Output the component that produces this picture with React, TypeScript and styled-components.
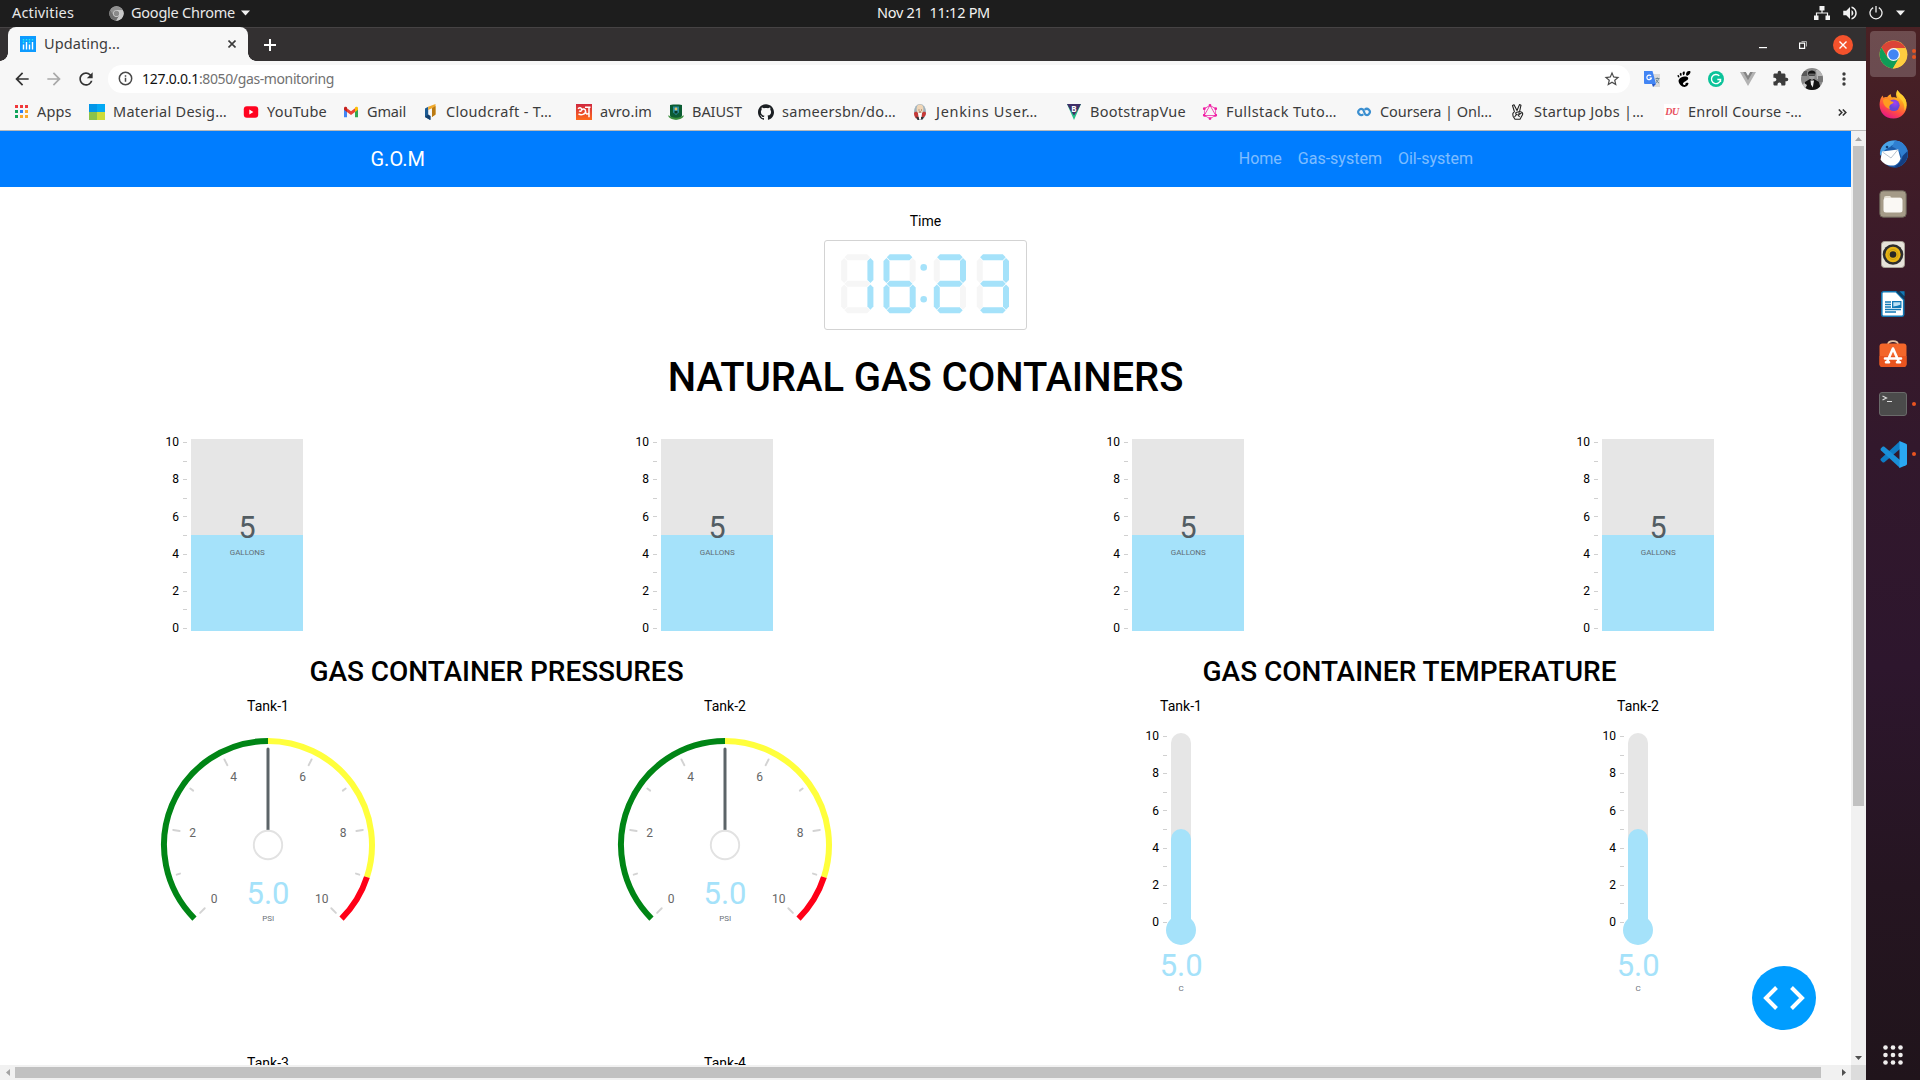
import React, { useLayoutEffect, useRef, useState } from 'react';
import styled, { createGlobalStyle } from 'styled-components';
import { SiGithub, SiGnome, SiGraphql } from 'react-icons/si';
import { MdExtension, MdStarOutline, MdArrowBack, MdArrowForward, MdRefresh, MdVolumeUp } from 'react-icons/md';

const GlobalStyle = createGlobalStyle`
  * { box-sizing: border-box; }
  html, body { margin: 0; padding: 0; overflow: hidden; background: #fff; }
  svg { display: block; flex: none; }
`;

const UI_FONT = '"Noto Sans", "Open Sans", sans-serif';
const PAGE_FONT = 'Roboto, "Liberation Sans", sans-serif';
const ACCENT = '#a5e2fa';

/* ---------- shared text ---------- */

const FitBox = styled.span<{ $w: number; $size: number; $color: string; $lift: number }>`
  display: block;
  flex: none;
  width: ${(p) => p.$w}px;
  padding-bottom: ${(p) => p.$lift * 2}px;
  font-family: ${UI_FONT};
  font-size: ${(p) => p.$size}px;
  line-height: 20px;
  color: ${(p) => p.$color};
  white-space: pre;
`;

interface FitProps { w: number; size?: number; color?: string; lift?: number; children: string }

/* Spreads or tightens its letters so that the text fills the given width. */
function Fit({ w, size = 14.5, color = '#3c3c3c', lift = 1, children }: FitProps) {
  const ref = useRef<HTMLSpanElement>(null);
  const [spacing, setSpacing] = useState(0);
  useLayoutEffect(() => {
    if (ref.current) {
      const natural = ref.current.getBoundingClientRect().width;
      setSpacing((w - natural) / children.length);
    }
  }, [w, children]);
  return (
    <FitBox $w={w} $size={size} $color={color} $lift={lift}>
      <span ref={ref} style={{ letterSpacing: spacing }}>{children}</span>
    </FitBox>
  );
}

const Gap = styled.div<{ $w: number }>`
  flex: none;
  width: ${(p) => p.$w}px;
`;

/* ---------- desktop ---------- */

const Desktop = styled.div`
  width: 1920px;
  height: 1080px;
  display: flex;
  flex-direction: column;
  overflow: hidden;
`;
const TopBar = styled.header`
  height: 27px;
  flex: none;
  display: flex;
  align-items: center;
  padding-bottom: 1px;
  background: #1d1d1d;
`;
const Work = styled.div`
  flex: 1;
  display: flex;
  min-height: 0;
`;
const Browser = styled.main`
  width: 1866px;
  display: flex;
  flex-direction: column;
`;

/* ---------- browser frame ---------- */

const TabStrip = styled.div`
  height: 34px;
  flex: none;
  display: flex;
  background: #333031;
  border-top: 1px solid #464344;
  padding-left: 8px;
`;
const Tab = styled.div`
  position: relative;
  width: 240px;
  display: flex;
  align-items: center;
  margin-top: -1px;
  padding-left: 12px;
  gap: 8px;
  border-radius: 8px 8px 0 0;
  background: #f7f7f7;
  &::before, &::after {
    content: '';
    position: absolute;
    bottom: 0;
    width: 8px;
    height: 8px;
  }
  &::before { left: -8px; background: radial-gradient(circle at 0 0, transparent 7.5px, #f7f7f7 8px); }
  &::after { right: -8px; background: radial-gradient(circle at 100% 0, transparent 7.5px, #f7f7f7 8px); }
`;
const StripRest = styled.div`
  flex: 1;
  display: flex;
  align-items: center;
  padding-left: 16px;
`;
const Spacer = styled.div`flex: 1;`;
const CloseDisc = styled.div`
  width: 20px;
  height: 20px;
  border-radius: 50%;
  background: #f4522c;
  display: flex;
  align-items: center;
  justify-content: center;
`;
const Toolbar = styled.div`
  height: 35px;
  flex: none;
  display: flex;
  align-items: center;
  background: #f7f7f7;
  padding-left: 12px;
`;
const Omnibox = styled.div`
  width: 1522px;
  height: 28px;
  border-radius: 14px;
  background: #fff;
  display: flex;
  align-items: center;
  padding: 0 9px 0 10px;
`;
const Extensions = styled.div`
  display: flex;
  align-items: center;
  padding-left: 11px;
`;
const ExtSlot = styled.div<{ $w?: number }>`
  width: ${(p) => p.$w ?? 32}px;
  height: 24px;
  display: flex;
  align-items: center;
  justify-content: center;
`;
const Avatar = styled.div`
  width: 22px;
  height: 22px;
  border-radius: 50%;
  overflow: hidden;
`;
const Bookmarks = styled.div`
  height: 35px;
  flex: none;
  display: flex;
  align-items: center;
  background: #f7f7f7;
  border-bottom: 1px solid #b9b9b9;
  padding: 0 0 2px 13px;
`;
const Bookmark = styled.div<{ $w: number }>`
  width: ${(p) => p.$w}px;
  flex: none;
  display: flex;
  align-items: center;
  gap: 8px;
`;
const View = styled.div`
  flex: 1;
  min-height: 0;
  display: grid;
  grid-template-columns: 1851px 15px;
  grid-template-rows: 934px 15px;
`;

/* ---------- scrollbars ---------- */

const VTrack = styled.div`
  background: #f1f1f1;
  display: flex;
  flex-direction: column;
  align-items: center;
  justify-content: space-between;
`;
const HTrack = styled.div`
  background: #f1f1f1;
  display: flex;
  align-items: center;
  justify-content: space-between;
`;
const ArrowCell = styled.div`
  width: 15px;
  height: 15px;
  display: flex;
  align-items: center;
  justify-content: center;
`;
const VThumb = styled.div`
  width: 11px;
  height: 660px;
  margin-bottom: auto;
  background: #c1c1c1;
`;
const HThumb = styled.div`
  width: 1806px;
  height: 11px;
  margin-right: auto;
  background: #c1c1c1;
`;
const Corner = styled.div`background: #dcdcdc;`;

/* ---------- page ---------- */

const Page = styled.div`
  position: relative;
  overflow: hidden;
  background: #fff;
  font-family: ${PAGE_FONT};
  color: #000;
`;
const Nav = styled.nav`
  height: 56px;
  background: #007dff;
  display: flex;
  align-items: center;
  justify-content: space-between;
  padding: 0 378px 0 370.5px;
`;
const Brand = styled.span`
  font-size: 20px;
  line-height: 30px;
  color: #fff;
`;
const Links = styled.div`
  display: flex;
  gap: 16px;
  font-size: 16px;
  line-height: 24px;
  color: rgba(255, 255, 255, 0.5);
`;
const TimeBlock = styled.section`
  padding-top: 24px;
  display: flex;
  flex-direction: column;
  align-items: center;
`;
const Label = styled.div`
  height: 21px;
  font-size: 14px;
  line-height: 21px;
  text-align: center;
`;
const ClockBox = styled.div`
  width: 203px;
  height: 90px;
  margin-top: 8px;
  border: 1px solid #d3d3d3;
  border-radius: 3px;
  padding: 13px 0 0 16px;
`;
const H1 = styled.h1`
  margin: 24px 0 0;
  font-size: 40px;
  line-height: 48px;
  font-weight: 500;
  letter-spacing: -0.05px;
  text-align: center;
`;
const TankRow = styled.section`
  height: 253px;
  display: flex;
  padding: 29px 0 0 150px;
`;
const TankCell = styled.div`
  flex: none;
  width: 470.33px;
`;
const Halves = styled.div`
  display: flex;
  width: 1828px;
  margin-left: 39.5px;
`;
const Half = styled.section<{ $shift?: number }>`
  width: 914px;
  flex: none;
  margin-left: ${(p) => p.$shift ?? 0}px;
`;
const H2 = styled.h2`
  margin: 0 0 8px;
  height: 33px;
  font-size: 28px;
  line-height: 33px;
  font-weight: 500;
  letter-spacing: -0.04px;
  text-align: center;
`;
const Cells = styled.div`
  display: grid;
  grid-template-columns: 457px 457px;
  grid-auto-rows: 357px;
`;
const Cell = styled.div`
  display: flex;
  flex-direction: column;
  align-items: center;
`;
const DebugButton = styled.div`
  position: absolute;
  left: 1752px;
  top: 835px;
  width: 64px;
  height: 64px;
  border-radius: 50%;
  background: #009dff;
  display: flex;
  align-items: center;
  justify-content: center;
`;
const ChartText = styled.text`
  font-family: ${PAGE_FONT};
`;

/* ---------- seven segment clock ---------- */

const hSeg = (y: number) => `3.3,${y + 3} 6.2,${y} 26,${y} 28.9,${y + 3} 26,${y + 6} 6.2,${y + 6}`;
const vSeg = (x: number, y: number) =>
  `${x + 3},${y} ${x + 6},${y + 3} ${x + 6},${y + 22} ${x + 3},${y + 25.2} ${x},${y + 22} ${x},${y + 3}`;
const SEGMENTS: Record<string, string> = {
  a: hSeg(0), g: hSeg(26.5), d: hSeg(53),
  f: vSeg(0, 3.6), b: vSeg(26.2, 3.6), e: vSeg(0, 30.2), c: vSeg(26.2, 30.2),
};
const DIGITS: Record<string, string> = { '1': 'bc', '6': 'acdefg', '2': 'abged', '3': 'abgcd' };

function Clock() {
  const places: [string, number][] = [['1', 0.2], ['6', 42.5], ['2', 92.8], ['3', 135.8]];
  return (
    <svg width="170" height="60" viewBox="0 0 170 60">
      {places.map(([d, x]) => (
        <g key={d} transform={`translate(${x} 0.3)`}>
          {Object.entries(SEGMENTS).map(([k, pts]) => (
            <polygon key={k} points={pts} fill={DIGITS[d].includes(k) ? ACCENT : '#f6f6f6'} />
          ))}
        </g>
      ))}
      <circle cx="82.7" cy="13.4" r="3.3" fill={ACCENT} />
      <circle cx="82.7" cy="45.3" r="3.3" fill={ACCENT} />
    </svg>
  );
}

/* ---------- charts ---------- */

function Axis({ right, top }: { right: number; top: number }) {
  return (
    <g>
      {Array.from({ length: 11 }, (_, i) => 10 - i).map((v) => {
        const y = top + (10 - v) * 18.6;
        return (
          <g key={v}>
            <rect x={right - 4} y={Math.round(y)} width="4" height="1" fill="#d0d0d0" />
            {v % 2 === 0 && (
              <ChartText x={right - 8} y={y + 4.2} fontSize="12" textAnchor="end" fill="#000">{v}</ChartText>
            )}
          </g>
        );
      })}
    </g>
  );
}

function Tank() {
  return (
    <svg width="160" height="210" viewBox="0 0 160 210">
      <Axis right={37} top={11} />
      <rect x="41" y="8" width="112" height="192" fill="#e6e6e6" />
      <rect x="41" y="104" width="112" height="96" fill={ACCENT} />
      <ChartText x="97.2" y="106.6" fontSize="30.5" textAnchor="middle" fill="#535d63">5</ChartText>
      <ChartText x="97.2" y="124.4" fontSize="8" textAnchor="middle" fill="#5f6d75">GALLONS</ChartText>
    </svg>
  );
}

const polar = (r: number, deg: number): [number, number] => {
  const a = (deg * Math.PI) / 180;
  return [110 + r * Math.sin(a), 128 - r * Math.cos(a)];
};
const arc = (from: number, to: number) => {
  const [x1, y1] = polar(104, from);
  const [x2, y2] = polar(104, to);
  return `M${x1} ${y1}A104 104 0 ${to - from > 180 ? 1 : 0} 1 ${x2} ${y2}`;
};
const GAUGE_LABELS: [string, number, number][] = [
  ['0', 56.2, 186], ['2', 34.7, 120], ['4', 75.6, 64], ['6', 144.5, 64], ['8', 185, 120], ['10', 163.7, 186],
];

function Gauge() {
  return (
    <svg width="220" height="240" viewBox="0 0 220 240">
      <g fill="none" strokeWidth="6">
        <path d={arc(-135, 0)} stroke="#008515" />
        <path d={arc(0, 108)} stroke="#ffff3c" />
        <path d={arc(108, 135)} stroke="#ff0017" />
      </g>
      {Array.from({ length: 11 }, (_, i) => {
        if (i === 5) return null;
        const deg = -135 + i * 27;
        const [x1, y1] = polar(96, deg);
        const [x2, y2] = polar(i % 2 === 0 ? 89.5 : 92.5, deg);
        return <line key={i} x1={x1} y1={y1} x2={x2} y2={y2} stroke="#d3d3d3" strokeWidth="1.9" strokeLinecap="round" />;
      })}
      {GAUGE_LABELS.map(([t, x, y]) => (
        <ChartText key={t} x={x} y={y} fontSize="12" textAnchor="middle" fill="#666">{t}</ChartText>
      ))}
      <line x1="110" y1="32" x2="110" y2="113" stroke="#5c6468" strokeWidth="3" strokeLinecap="round" />
      <circle cx="110" cy="128" r="14.2" fill="#fff" stroke="#e2e2e2" strokeWidth="1.9" />
      <ChartText x="110" y="187" fontSize="31" textAnchor="middle" fill={ACCENT}>5.0</ChartText>
      <ChartText x="110.2" y="203.7" fontSize="8" textAnchor="middle" fill="#6b7179">PSI</ChartText>
    </svg>
  );
}

function Thermometer() {
  return (
    <svg width="120" height="290" viewBox="0 0 120 290">
      <Axis right={46} top={19} />
      <rect x="50" y="16" width="20" height="200" rx="10" fill="#e6e6e6" />
      <rect x="50" y="112" width="20" height="104" rx="10" fill={ACCENT} />
      <circle cx="60" cy="213" r="15" fill={ACCENT} />
      <ChartText x="60.2" y="259" fontSize="31" textAnchor="middle" fill={ACCENT}>5.0</ChartText>
      <ChartText x="60.2" y="274.3" fontSize="8" textAnchor="middle" fill="#6b7179">C</ChartText>
    </svg>
  );
}

/* ---------- icons ---------- */

function ChromeLogo({ size, mono = false }: { size: number; mono?: boolean }) {
  const c = mono ? ['#8f8f8f', '#6e6e6e', '#c9c9c9', '#8a8a8a', '#d5d5d5'] : ['#db4437', '#0f9d58', '#ffcd40', '#4285f4', '#f5f5f5'];
  return (
    <svg width={size} height={size} viewBox="0 0 48 48">
      <circle cx="24" cy="24" r="23" fill={c[2]} />
      <path d="M4.1 12.5A23 23 0 0 1 44 13.5H24L14.5 29.5Z" fill={c[0]} />
      <path d="M4.1 12.5A23 23 0 0 0 23 47L33.5 29.5L14.5 29.5Z" fill={c[1]} />
      <path d="M24 13.5H44A23 23 0 0 1 23 47L33.5 29.5Z" fill={c[2]} />
      <circle cx="24" cy="24" r="10.8" fill={c[4]} />
      <circle cx="24" cy="24" r="8.6" fill={c[3]} />
    </svg>
  );
}
const Caret = () => (
  <svg width="9" height="6" viewBox="0 0 9 6"><path d="M0 .5h9L4.5 5.5z" fill="#f2f2f2" /></svg>
);
const DashIcon = () => (
  <svg width="16" height="16" viewBox="0 0 16 16">
    <path fill="#0d9bff" d="M0 0h16v16H0z" />
    <path stroke="#fff" strokeWidth="1.4" d="M3.5 8.5v5M6.5 6v7.5M9.5 8.5v5M12.5 6v7.5" />
    <path stroke="#22f0f0" strokeWidth="1.4" d="M3.5 3v1.4M6.5 3v1.4M9.5 3v1.4M12.5 3v1.4M3.5 5.6V7M9.5 5.6V7" />
  </svg>
);
const AppsIcon = () => (
  <svg width="16" height="16" viewBox="0 0 16 16">
    {['#f0383a', '#f0383a', '#f0383a', '#11a35a', '#2d7ff5', '#fba92c', '#11a35a', '#fba92c', '#fba92c'].map((f, i) => (
      <rect key={i} x={2 + (i % 3) * 5} y={1 + Math.floor(i / 3) * 5} width="3" height="3" fill={f} />
    ))}
  </svg>
);
const MaterialIcon = () => (
  <svg width="16" height="16" viewBox="0 0 16 16">
    <path fill="#0296e8" d="M0 0h8v8H0z" /><path fill="#03a9f4" d="M8 0h8v8H8z" />
    <path fill="#8bc34a" d="M0 8h8v8H0z" /><path fill="#cddc39" d="M8 8h8v8H8z" />
  </svg>
);
const YoutubeIcon = () => (
  <svg width="16" height="16" viewBox="0 0 16 16">
    <rect x=".8" y="2.3" width="14.4" height="11.4" rx="3" fill="#ff0320" /><path d="M6.3 5.6v4.8L10.4 8z" fill="#fff" />
  </svg>
);
const GmailIcon = () => (
  <svg width="16" height="16" viewBox="0 0 16 16">
    <path fill="#4285f4" d="M1 5v8.3h3V7z" /><path fill="#34a853" d="M15 5v8.3h-3V7z" />
    <path fill="#ea4335" d="M4 4.2l4 3.1 4-3.1V8l-4 3.1L4 8z" />
    <path fill="#c5221f" d="M1 4.2A1.6 1.6 0 0 1 3.6 3l.4.4V8L1 5.8z" /><path fill="#fbbc04" d="M15 4.2A1.6 1.6 0 0 0 12.4 3l-.4.4V8l3-2.2z" />
  </svg>
);
const CloudcraftIcon = () => (
  <svg width="16" height="16" viewBox="0 0 16 16">
    <path fill="#1d5b93" d="M3 4.500L6.200 2.700V12L8 13v3L3 13z" />
    <path fill="#14406d" d="M6.200 10.500L8.600 12v4L3 13z" />
    <path fill="#f0a92c" d="M6.200 2.700L13.500 0v10.500L10 13V4.200L6.200 6z" />
    <path fill="#b97a14" d="M10 4.200L13.500 2v8.500L10 13z" />
  </svg>
);
const AvroTile = styled.div`
  width: 16px;
  height: 16px;
  background: linear-gradient(#d0283f, #ff6a1c);
  display: flex;
  align-items: center;
  justify-content: center;
`;
const AvroIcon = () => (
  <AvroTile>
    <svg width="14" height="12" viewBox="0 0 14 12" fill="none" stroke="#fff" strokeWidth="1.5">
      <path d="M1 2.800c2-1.800 4.200-.8 3.600 1.400-.4 1.200-1.800 1.300-2.400.6M4.600 4.200c1-2 4-1.600 4 1 0 3.300-4.600 4.300-7.100 2.600M8.600 5.200c0 3 1.500 3.500 3 2M12 .8v10.400M8 1.300h5.500" />
    </svg>
  </AvroTile>
);
const BaiustIcon = () => (
  <svg width="16" height="16" viewBox="0 0 16 16">
    <path fill="#0b5c33" d="M2 1l3-.6h6L14 1v10c0 2.500-3 4-6 4.600C5 15 2 13.500 2 11z" />
    <path d="M.5 11c3 3.600 12 3.600 15 0v1.800c-3 4-12 4-15 0z" fill="#3a8f3d" />
    <path fill="#2b8e9f" d="M5 2.500h6v6l-3 2.500-3-2.500z" /><circle cx="8" cy="5" r="1.400" fill="#e4c468" /><path d="M6.500 7h3v2.500h-3z" fill="#0a3b28" />
  </svg>
);
const JenkinsIcon = () => (
  <svg width="16" height="16" viewBox="0 0 16 16">
    <ellipse cx="8" cy="8" rx="6" ry="8" fill="#9fb2bd" /><path fill="#c63a38" d="M2 9c2-2 3-1 4 0l1 5-3 .6C2.700 13 2 11 2 9zM14 9c-1-2-3-1-4 0l-.5 4H12c1.300-1 2-2.500 2-4z" />
    <ellipse cx="8" cy="5" rx="3.400" ry="4.400" fill="#f0d6b7" /><path fill="#fff" d="M6 9h4l-1 6H7z" /><path fill="#31363a" d="M4 12.500l3 1v2.500H5.500zM9 13l3 0-1.500 2.500H9z" />
    <path d="M6.500 6h1M9 6h1M7 8h2" stroke="#5b3b2a" strokeWidth=".7" />
  </svg>
);
const BootstrapVueIcon = () => (
  <svg width="16" height="16" viewBox="0 0 16 16">
    <path fill="#26c28a" d="M1 0h14L8 16z" /><path fill="#402f68" d="M1 0h14l-3.400 6.200L8 11.500 4.400 6.200z" />
    <text x="8" y="7.500" fontSize="8" fontWeight="bold" textAnchor="middle" fill="#fff" fontFamily={UI_FONT}>B</text>
  </svg>
);
const CourseraIcon = () => (
  <svg width="16" height="16" viewBox="0 0 16 16" fill="none" stroke="#3b8fd0" strokeWidth="2.200">
    <path d="M7.300 10.200A3 3 0 1 1 7 5.500C8 6.500 8.200 9.300 9.300 10.500A3 3 0 1 0 8.700 5.800" />
  </svg>
);
const VictoryIcon = () => (
  <svg width="16" height="16" viewBox="0 0 16 16" fill="none" stroke="#222" strokeWidth="1.100" strokeLinejoin="round">
    <path d="M4.500 8L2.500 1.500 4 .8 7 6.500 9.500.6 11 1.200 9.600 7.500M4.500 8c-1.800.5-2 2-1.300 4.500L5 15.300h5l2.500-4.500c.6-1.800-.4-3-2.900-3.300L6 8.500c-.6 1.500 0 2.300 1.600 2.200M6.500 10.500l-2 2.500M9 8.500v2l2.500-1.500M8 10.500l1.500 2.500" />
  </svg>
);
const DuTile = styled.div`
  width: 16px;
  height: 16px;
  background: #fff;
  color: #e8505e;
  font: italic bold 10px/16px "Liberation Serif", serif;
  letter-spacing: -0.5px;
  text-align: center;
`;

const BOOKMARKS: { w: number; tw: number; text: string; icon: React.ReactNode }[] = [
  { w: 76, tw: 34.500, text: 'Apps', icon: <AppsIcon /> },
  { w: 154, tw: 114, text: 'Material Desig…', icon: <MaterialIcon /> },
  { w: 100, tw: 60, text: 'YouTube', icon: <YoutubeIcon /> },
  { w: 79, tw: 39, text: 'Gmail', icon: <GmailIcon /> },
  { w: 154, tw: 106, text: 'Cloudcraft - T…', icon: <CloudcraftIcon /> },
  { w: 92, tw: 52, text: 'avro.im', icon: <AvroIcon /> },
  { w: 90, tw: 50, text: 'BAIUST', icon: <BaiustIcon /> },
  { w: 154, tw: 114, text: 'sameersbn/do…', icon: <SiGithub size={16} color="#1b1f23" /> },
  { w: 154, tw: 102, text: 'Jenkins User…', icon: <JenkinsIcon /> },
  { w: 136, tw: 96, text: 'BootstrapVue', icon: <BootstrapVueIcon /> },
  { w: 154, tw: 111, text: 'Fullstack Tuto…', icon: <SiGraphql size={16} color="#f01fa5" /> },
  { w: 154, tw: 112, text: 'Coursera | Onl…', icon: <CourseraIcon /> },
  { w: 154, tw: 110, text: 'Startup Jobs |…', icon: <VictoryIcon /> },
  { w: 174, tw: 114, text: 'Enroll Course -…', icon: <DuTile>DU</DuTile> },
];

/* ---------- dock ---------- */

const Dock = styled.aside`
  width: 54px;
  display: flex;
  flex-direction: column;
  align-items: center;
  padding-top: 2px;
  background: linear-gradient(#4a2124 0, #3d1b28 180px, #32182c 420px, #2d162d 640px, #251521 860px, #20141b 1053px);
`;
const DockItem = styled.div<{ $active?: boolean }>`
  position: relative;
  width: 46px;
  height: 46px;
  margin: 2px 0;
  flex: none;
  display: flex;
  align-items: center;
  justify-content: center;
  border-radius: 4px;
  background: ${(p) => (p.$active ? 'rgba(255,255,255,0.2)' : 'transparent')};
`;
const Dots = styled.div`
  position: absolute;
  right: 0;
  top: 50%;
  transform: translateY(-50%);
  display: flex;
  flex-direction: column;
  gap: 2px;
`;
const Dot = styled.i`
  width: 4px;
  height: 4px;
  border-radius: 50%;
  background: #e95420;
`;
const GridWrap = styled.div`
  margin-top: auto;
  margin-bottom: 15px;
`;

const FirefoxIcon = () => (
  <svg width="29" height="29" viewBox="0 0 29 29">
    <defs>
      <linearGradient id="ff" x1=".8" y1="0" x2=".3" y2="1"><stop offset="0" stopColor="#fff04a" /><stop offset=".35" stopColor="#ffa01f" /><stop offset=".7" stopColor="#ff4a45" /><stop offset="1" stopColor="#e3158a" /></linearGradient>
      <radialGradient id="fp" cx=".6" cy=".3"><stop offset="0" stopColor="#a43ff5" /><stop offset="1" stopColor="#6247d6" /></radialGradient>
    </defs>
    <path fill="url(#ff)" d="M18.500 0c1 3 6 5 8 9.500 4 9-2 19-12 19S-1 20 1 11c.4-2.500 1.300-4 2.600-5.500l.8 2.200C5.500 7 7 7 8 7.200 9.500 5 11 4.500 12 4.200c-.4 1.400.2 2.600 1 3.300 2-.5 4 .2 5 .8-1.500-3-1-6 .5-8.300z" />
    <circle cx="14.800" cy="15.300" r="5.800" fill="url(#fp)" />
    <path fill="#ff9b20" d="M4 10c2.500-1.600 5-1 7 .8 1 .7 3 .7 3.700 1.200-.4 1.600-2.700 2-3.600 3-1 1.200-1 2.500-.1 4-4-1-7-4-7-9z" />
    <path fill="#ffcf2f" d="M18.500 0c1 3 6 5 8 9.500 1.500 3.500 1.200 8-1 11 .2-5-1-9-4.500-12C18 6 17 3 18.500 0z" opacity=".85" />
  </svg>
);
const ThunderbirdIcon = () => (
  <svg width="31" height="30" viewBox="0 0 31 30">
    <circle cx="16.500" cy="15" r="13.500" fill="#1c5caa" />
    <path fill="#4aa3e8" d="M2 17C1 7 8 1 17 1.500c4 .3 7 2 9 4C20 4 15 5 12 8c-3 1-7 4-10 9z" />
    <path fill="#2f7fd0" d="M17 1.500c7 .5 12.500 6 13 12.500-.3 6-3 10-7 12.500 2-7 1-15-9-19z" />
    <path fill="#143f82" d="M29.500 12c2 8-5 17.500-14 17-1 0 8-4 9-12z" />
    <path fill="#fff" d="M4 12.500l16-2 2.500 9c-1 4-4 6.500-7 7-5 .5-10-1-13-6z" />
    <path d="M4.500 13l8.500 6 7-8.500" fill="none" stroke="#b9c2cc" strokeWidth="1" />
    <circle cx="9" cy="8" r="1.300" fill="#103c73" />
  </svg>
);
const FilesIcon = () => (
  <svg width="28" height="28" viewBox="0 0 28 28">
    <rect x=".8" y=".8" width="26.400" height="26.400" rx="3.500" fill="#a59b88" stroke="#6a6357" />
    <path fill="#e6e0d4" d="M5 8a2 2 0 0 1 2-2h4l1.500 1.500H21a2 2 0 0 1 2 2V12H5z" />
    <rect x="4.500" y="8" width="19" height="14.500" rx="2.500" fill="#faf8f4" />
  </svg>
);
const RhythmboxIcon = () => (
  <svg width="24" height="27" viewBox="0 0 24 27">
    <rect x=".5" y=".5" width="23" height="26" rx="3" fill="#e7e3da" stroke="#a8a297" />
    <circle cx="12" cy="13.500" r="10.300" fill="#2d2d2d" /><circle cx="12" cy="13.500" r="7.700" fill="#e8b414" /><circle cx="12" cy="13.500" r="3.300" fill="#262626" />
    <circle cx="12" cy="13.500" r="5" fill="none" stroke="#caa010" strokeWidth="1" />
  </svg>
);
const WriterIcon = () => (
  <svg width="24" height="26" viewBox="0 0 24 26">
    <path fill="#fff" stroke="#1278b5" strokeWidth="1.600" d="M2.500.8H15l7.700 8v14.700a1.700 1.700 0 0 1-1.700 1.700H2.500A1.700 1.700 0 0 1 .8 23.500v-21A1.700 1.700 0 0 1 2.500.8z" />
    <path fill="#0c3f63" d="M15 .5h8.500V9z" /><path fill="#1278b5" d="M18.500.3h5v5z" />
    <path stroke="#1278b5" strokeWidth="1.300" d="M4 11h6M4 13.500h6M4 16h6M4 18.500h16M4 21h11" /><path fill="#1278b5" d="M11 10h9.500v7H11z" /><path fill="#bfe2f5" d="M12.300 11.200h7v2.600l-3 1-4 .6z" />
  </svg>
);
const SoftwareIcon = () => (
  <svg width="28" height="28" viewBox="0 0 28 28">
    <path d="M9 6V4.500c0-4.500 10-4.500 10 0V6" fill="none" stroke="#e6c3a3" strokeWidth="1.700" />
    <rect x=".5" y="3.500" width="27" height="23.500" rx="3" fill="#f4662a" /><path fill="#e9541f" d="M.5 16h27v8a3 3 0 0 1-3 3h-21a3 3 0 0 1-3-3z" />
    <path d="M14 8.500L8.500 21M14 8.500l5.500 12.500M6 18.500h16M7 22.300h3M18 22.300h3" fill="none" stroke="#fff" strokeWidth="2.600" strokeLinecap="round" />
  </svg>
);
const TerminalIcon = () => (
  <svg width="28" height="24" viewBox="0 0 28 24">
    <rect x=".5" y=".5" width="27" height="23" rx="2.500" fill="#4b4b4b" stroke="#6a6a6a" />
    <path d="M3.500 4l4 2-4 2M8 9.500h5" fill="none" stroke="#ddd" strokeWidth="1.200" />
  </svg>
);
const VscodeIcon = () => (
  <svg width="27" height="27" viewBox="0 0 27 27">
    <path fill="#0f7bc4" d="M20 0L1 17.500c-.7.700-.7 1.500 0 2.200l1.500 1.500c.6.500 1.300.5 1.900.1L20 8z" />
    <path fill="#1a8fd8" d="M20 27L1 9.500C.4 8.800.4 8 1 7.300l1.500-1.500c.6-.5 1.300-.5 1.900-.1L20 19z" />
    <path fill="#2aa7f2" d="M19.500 0L26 2.800c.6.300 1 .8 1 1.500v18.400c0 .7-.4 1.200-1 1.500L19.500 27V0z" />
  </svg>
);

/* ---------- app ---------- */

export default function App() {
  return (
    <Desktop>
      <GlobalStyle />
      <TopBar>
        <Gap $w={12} />
        <Fit w={62} color="#e8e8e8">Activities</Fit>
        <Gap $w={35} />
        <ChromeLogo size={15} mono />
        <Gap $w={7} />
        <Fit w={104} color="#e8e8e8">Google Chrome</Fit>
        <Gap $w={6} />
        <Caret />
        <Gap $w={627} />
        <Fit w={113} color="#f2f2f2">{'Nov 21  11:12 PM'}</Fit>
        <Spacer />
        <svg width="16" height="14" viewBox="0 0 16 14"><path fill="#f2f2f2" d="M5.500 0h5v4.500h-5zM0 9.500h4.500V14H0zM11.500 9.500H16V14h-4.500z" /><path d="M8 4v3M2.500 10V7h11v3" fill="none" stroke="#f2f2f2" strokeWidth="1.200" /></svg>
        <Gap $w={11} />
        <MdVolumeUp size={18} color="#f2f2f2" />
        <Gap $w={10} />
        <svg width="14" height="14" viewBox="0 0 14 14" fill="none" stroke="#f2f2f2" strokeWidth="1.300"><path d="M7 0v6.500M4.200 1.600a6 6 0 1 0 5.600 0" /></svg>
        <Gap $w={13} />
        <Caret />
        <Gap $w={15} />
      </TopBar>
      <Work>
        <Browser>
          <TabStrip>
            <Tab>
              <DashIcon />
              <Fit w={76}>Updating...</Fit>
              <Spacer />
              <svg width="8" height="8" viewBox="0 0 8 8" stroke="#3c3c3c" strokeWidth="1.600"><path d="M.5.5l7 7M7.500.5l-7 7" /></svg>
              <Gap $w={4} />
            </Tab>
            <StripRest>
              <svg width="12" height="12" viewBox="0 0 12 12" stroke="#fff" strokeWidth="2"><path d="M6 0v12M0 6h12" /></svg>
              <Spacer />
              <svg width="8" height="8" viewBox="0 0 8 8"><path fill="#fff" d="M0 6h8v1.200H0z" /></svg>
              <Gap $w={32} />
              <svg width="8" height="8" viewBox="0 0 8 8" fill="none"><path d="M.6 2.100h5v5.300h-5z" stroke="#fff" strokeWidth="1.200" /><path d="M2.500.5h5v5" stroke="#aaa" /></svg>
              <Gap $w={26} />
              <CloseDisc><svg width="8" height="8" viewBox="0 0 8 8" stroke="#fff" strokeWidth="1.400"><path d="M.5.5l7 7M7.500.5l-7 7" /></svg></CloseDisc>
              <Gap $w={13} />
            </StripRest>
          </TabStrip>
          <Toolbar>
            <MdArrowBack size={20} color="#333" />
            <Gap $w={12} />
            <MdArrowForward size={20} color="#a9a9a9" />
            <Gap $w={12} />
            <MdRefresh size={20} color="#333" />
            <Gap $w={12} />
            <Omnibox>
              <svg width="15" height="15" viewBox="0 0 15 15" fill="none" stroke="#4a4a4a" strokeWidth="1.500"><circle cx="7.500" cy="7.500" r="6.200" /><path d="M7.500 6.700v4M7.500 4.200v1.500" /></svg>
              <Gap $w={9} />
              <Fit w={57} size={14} lift={0} color="#111">127.0.0.1</Fit>
              <Fit w={135} size={14} lift={0} color="#717171">:8050/gas-monitoring</Fit>
              <Spacer />
              <MdStarOutline size={18} color="#4a4a4a" />
            </Omnibox>
            <Extensions>
              <ExtSlot $w={22}>
                <svg width="16" height="16" viewBox="0 0 16 16"><path fill="#dadada" d="M6 3h10v13H9z" /><path fill="#4285f4" d="M0 0h8.500L12 13H1a1 1 0 0 1-1-1z" /><path fill="#2756c5" d="M8 13h4l-3 3z" /><path d="M7 5a2.300 2.300 0 1 0 .4 2H5.500" fill="none" stroke="#fff" strokeWidth="1.200" /><path d="M11.500 7.500h4M13.300 6.500v1M14.500 7.500c-.3 2-1.300 3.300-2.500 4.300M12 8.500c.6 1.600 1.600 2.800 3 3.600" fill="none" stroke="#6d8792" /></svg>
              </ExtSlot>
              <Gap $w={5} />
              <ExtSlot><SiGnome size={16} color="#000" /></ExtSlot>
              <ExtSlot><svg width="16" height="16" viewBox="0 0 16 16"><circle cx="8" cy="8" r="8" fill="#0bc39a" /><path d="M11.300 4.800a4.600 4.600 0 1 0 1.300 3.700H9.300M12.500 8.500V11" fill="none" stroke="#fff" strokeWidth="1.400" /></svg></ExtSlot>
              <ExtSlot><svg width="16" height="14" viewBox="0 0 16 14"><path fill="#b3b3b3" d="M0 0h5.500L8 4.300 10.500 0H16L8 14z" /><path fill="#858585" d="M3.200 0h2.600L8 3.900 10.200 0h2.600L8 8.300z" /></svg></ExtSlot>
              <ExtSlot><MdExtension size={17} color="#3c3c3c" /></ExtSlot>
              <ExtSlot>
                <Avatar>
                  <svg width="22" height="22" viewBox="0 0 22 22"><path fill="#8a8a8a" d="M0 0h22v22H0z" /><path fill="#b5b5b5" d="M15 2h7v9h-6z" /><path fill="#5a5a5a" d="M0 3h6v5H0z" /><path fill="#777" d="M17 8h5v6h-5z" /><path fill="#141414" d="M3 22l1-8 5-3h4l5 3 2 8zM7 5c.5-3.500 7.500-3.500 7.500 0L14 7H7.500z" /><path fill="#a0a0a0" d="M7.800 5.800h6l-.5 4.700-2.300 1.500-2.500-1.500z" /><path fill="#2a2a2a" d="M7.800 6.500h6v1.300h-6z" /><path fill="#ececec" d="M9.500 12.500h3.500l-1.200 7-1.800-3z" /><path fill="#ccc" d="M3 15l3 2-2 4-3-2z" /></svg>
                </Avatar>
              </ExtSlot>
              <ExtSlot><svg width="4" height="16" viewBox="0 0 4 16" fill="#3c3c3c"><circle cx="2" cy="3" r="1.700" /><circle cx="2" cy="8" r="1.700" /><circle cx="2" cy="13" r="1.700" /></svg></ExtSlot>
            </Extensions>
          </Toolbar>
          <Bookmarks>
            {BOOKMARKS.map((b) => (
              <Bookmark key={b.text} $w={b.w}>{b.icon}<Fit w={b.tw}>{b.text}</Fit></Bookmark>
            ))}
            <svg width="9" height="7" viewBox="0 0 9 7" fill="none" stroke="#333" strokeWidth="1.600"><path d="M.8.500L3.800 3.500.8 6.500M4.800.500L7.800 3.500 4.800 6.500" /></svg>
          </Bookmarks>
          <View>
            <Page>
              <Nav>
                <Brand>G.O.M</Brand>
                <Links><span>Home</span><span>Gas-system</span><span>Oil-system</span></Links>
              </Nav>
              <TimeBlock>
                <Label>Time</Label>
                <ClockBox><Clock /></ClockBox>
              </TimeBlock>
              <H1>NATURAL GAS CONTAINERS</H1>
              <TankRow>
                {[1, 2, 3, 4].map((n) => <TankCell key={n}><Tank /></TankCell>)}
              </TankRow>
              <Halves>
                <Half>
                  <H2>GAS CONTAINER PRESSURES</H2>
                  <Cells>
                    <Cell><Label>Tank-1</Label><Gauge /></Cell>
                    <Cell><Label>Tank-2</Label><Gauge /></Cell>
                    <Cell><Label>Tank-3</Label></Cell>
                    <Cell><Label>Tank-4</Label></Cell>
                  </Cells>
                </Half>
                <Half $shift={-1}>
                  <H2>GAS CONTAINER TEMPERATURE</H2>
                  <Cells>
                    <Cell><Label>Tank-1</Label><Thermometer /></Cell>
                    <Cell><Label>Tank-2</Label><Thermometer /></Cell>
                  </Cells>
                </Half>
              </Halves>
              <DebugButton>
                <svg width="42" height="24" viewBox="0 0 42 24" fill="none" stroke="#fff" strokeWidth="4"><path d="M13.500 1.500L3 12l10.500 10.500M28.500 1.500L39 12 28.500 22.500" /></svg>
              </DebugButton>
            </Page>
            <VTrack>
              <ArrowCell><svg width="7" height="4" viewBox="0 0 7 4"><path d="M0 4h7L3.500 0z" fill="#a3a3a3" /></svg></ArrowCell>
              <VThumb />
              <ArrowCell><svg width="7" height="4" viewBox="0 0 7 4"><path d="M0 0h7L3.500 4z" fill="#505050" /></svg></ArrowCell>
            </VTrack>
            <HTrack>
              <ArrowCell><svg width="4" height="7" viewBox="0 0 4 7"><path d="M4 0v7L0 3.500z" fill="#a3a3a3" /></svg></ArrowCell>
              <HThumb />
              <ArrowCell><svg width="4" height="7" viewBox="0 0 4 7"><path d="M0 0v7l4-3.500z" fill="#505050" /></svg></ArrowCell>
            </HTrack>
            <Corner />
          </View>
        </Browser>
        <Dock>
          <DockItem $active><ChromeLogo size={29} /><Dots><Dot /><Dot /></Dots></DockItem>
          <DockItem><FirefoxIcon /></DockItem>
          <DockItem><ThunderbirdIcon /></DockItem>
          <DockItem><FilesIcon /></DockItem>
          <DockItem><RhythmboxIcon /></DockItem>
          <DockItem><WriterIcon /></DockItem>
          <DockItem><SoftwareIcon /></DockItem>
          <DockItem><TerminalIcon /><Dots><Dot /></Dots></DockItem>
          <DockItem><VscodeIcon /><Dots><Dot /></Dots></DockItem>
          <GridWrap>
            <svg width="20" height="20" viewBox="0 0 20 20" fill="#f0eeee">
              {Array.from({ length: 9 }, (_, i) => <circle key={i} cx={2.500 + (i % 3) * 7.500} cy={2.500 + Math.floor(i / 3) * 7.500} r="2.300" />)}
            </svg>
          </GridWrap>
        </Dock>
      </Work>
    </Desktop>
  );
}
